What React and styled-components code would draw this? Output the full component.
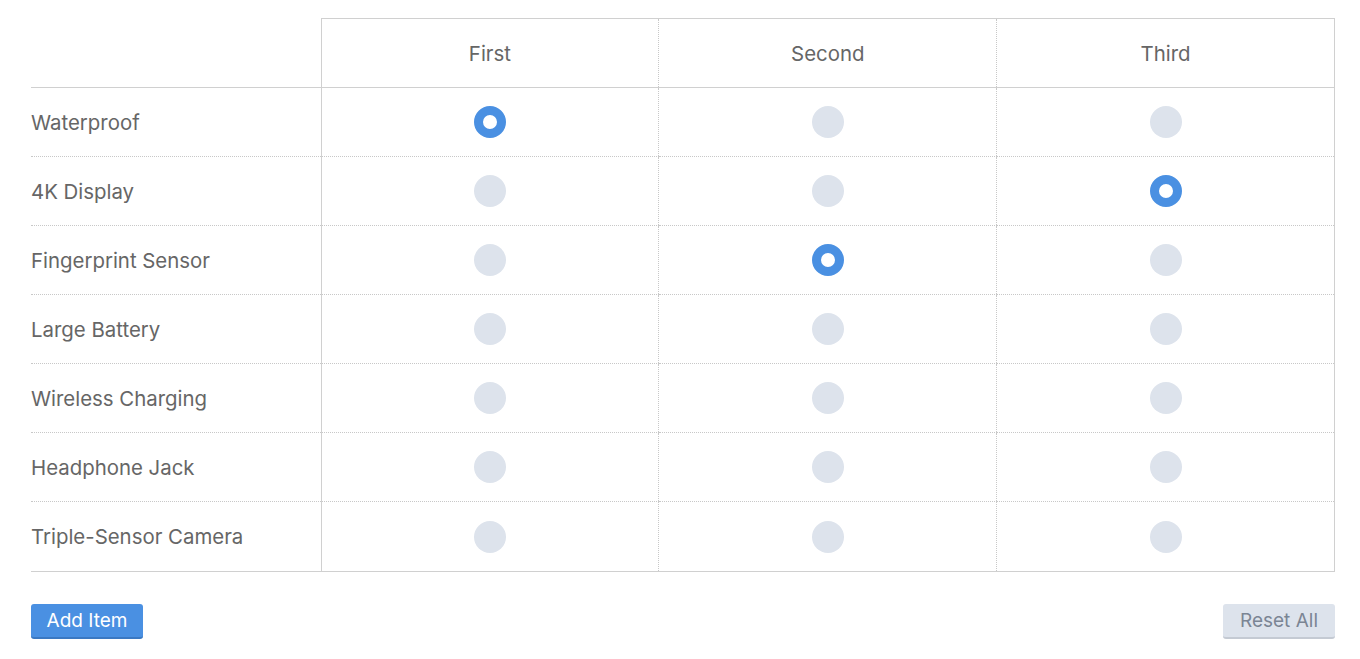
import React, { useState } from "react";
import styled, { createGlobalStyle } from "styled-components";

const GlobalStyle = createGlobalStyle`
  html, body { margin: 0; padding: 0; background: #fff; }
  body { font-family: Inter, "Liberation Sans", Arial, sans-serif; }
`;

const Page = styled.div`
  padding: 18px 25px 0 31px;
`;

const Table = styled.table`
  width: 100%;
  border-collapse: collapse;
  table-layout: fixed;
`;

const LabelCol = styled.col`
  width: 290px;
`;

const HeadCell = styled.th`
  height: 68px;
  padding: 0;
  font-weight: normal;
  font-size: 20.4px;
  color: #666;
  text-align: center;
  border-top: 1px solid #d0d0d0;
  border-bottom: 1px solid #d0d0d0;
  border-left: ${(p) => (p.$first ? "1px solid #d0d0d0" : "1px dotted #c8c8c8")};
  border-right: ${(p) => (p.$last ? "1px solid #d0d0d0" : "none")};
`;

const EmptyHead = styled.th`
  padding: 0;
  border-bottom: 1px solid #d0d0d0;
`;

const RowLabel = styled.td`
  height: ${(p) => (p.$last ? "69px" : "68px")};
  padding: 0;
  font-size: 20.4px;
  color: #666;
  border-bottom: ${(p) => (p.$last ? "1px solid #d0d0d0" : "1px dotted #c8c8c8")};
`;

const Cell = styled.td`
  padding: 0;
  text-align: center;
  vertical-align: middle;
  border-bottom: ${(p) => (p.$lastRow ? "1px solid #d0d0d0" : "1px dotted #c8c8c8")};
  border-left: ${(p) => (p.$first ? "1px solid #d0d0d0" : "1px dotted #c8c8c8")};
  border-right: ${(p) => (p.$last ? "1px solid #d0d0d0" : "none")};
`;

const Radio = styled.button`
  display: inline-block;
  box-sizing: border-box;
  width: 32px;
  height: 32px;
  border-radius: 50%;
  padding: 0;
  margin: 0;
  vertical-align: middle;
  cursor: pointer;
  background: ${(p) => (p.$on ? "#fff" : "#dde3ec")};
  border: ${(p) => (p.$on ? "9.5px solid #4a90e2" : "none")};
`;

const Footer = styled.div`
  display: flex;
  justify-content: space-between;
  margin-top: 32px;
`;

const Button = styled.button`
  box-sizing: border-box;
  height: 35px;
  width: 112px;
  padding: 0;
  border: none;
  border-radius: 3px;
  font-family: Inter, "Liberation Sans", Arial, sans-serif;
  font-size: 19px;
  cursor: pointer;
  background: ${(p) => (p.$primary ? "#4a90e2" : "#dde3ec")};
  color: ${(p) => (p.$primary ? "#fff" : "#7b8594")};
  border-bottom: 2px solid ${(p) => (p.$primary ? "#3a78c2" : "#c4cad3")};
`;

const columns = ["First", "Second", "Third"];
const initialRows = [
  { label: "Waterproof", value: 0 },
  { label: "4K Display", value: 2 },
  { label: "Fingerprint Sensor", value: 1 },
  { label: "Large Battery", value: null },
  { label: "Wireless Charging", value: null },
  { label: "Headphone Jack", value: null },
  { label: "Triple-Sensor Camera", value: null },
];

export default function App() {
  const [rows, setRows] = useState(initialRows);

  const select = (ri, ci) =>
    setRows((rs) => rs.map((r, i) => (i === ri ? { ...r, value: ci } : r)));

  return (
    <Page>
      <GlobalStyle />
      <Table>
        <colgroup>
          <LabelCol />
          <col />
          <col />
          <col />
        </colgroup>
        <thead>
          <tr>
            <EmptyHead />
            {columns.map((c, ci) => (
              <HeadCell key={c} $first={ci === 0} $last={ci === columns.length - 1}>
                {c}
              </HeadCell>
            ))}
          </tr>
        </thead>
        <tbody>
          {rows.map((r, ri) => {
            const lastRow = ri === rows.length - 1;
            return (
              <tr key={ri}>
                <RowLabel $last={lastRow}>{r.label}</RowLabel>
                {columns.map((c, ci) => (
                  <Cell
                    key={c}
                    $first={ci === 0}
                    $last={ci === columns.length - 1}
                    $lastRow={lastRow}
                  >
                    <Radio $on={r.value === ci} onClick={() => select(ri, ci)} aria-label={`${r.label} ${c}`} />
                  </Cell>
                ))}
              </tr>
            );
          })}
        </tbody>
      </Table>
      <Footer>
        <Button $primary onClick={() => setRows((rs) => [...rs, { label: `Item ${rs.length + 1}`, value: null }])}>
          Add Item
        </Button>
        <Button onClick={() => setRows((rs) => rs.map((r) => ({ ...r, value: null })))}>Reset All</Button>
      </Footer>
    </Page>
  );
}
